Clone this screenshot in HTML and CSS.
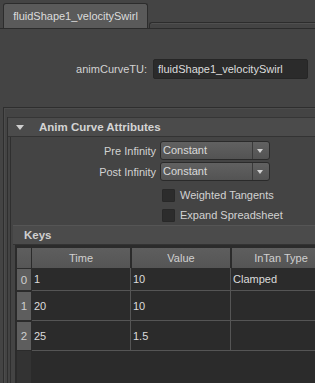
FILE: index.html
```html
<!DOCTYPE html>
<html lang="en">

<head>
    <meta charset="UTF-8">
    <title>Attribute Editor - animCurveTU</title>
    <link rel="stylesheet" href="styles.css">
</head>

<body>
    <div class="tabbar">
        <div class="tab">fluidShape1_velocitySwirl</div>
        <div class="tab-rest"></div>
    </div>

    <div class="node-row">
        <label class="node-label">animCurveTU:</label>
        <div class="node-field">fluidShape1_velocitySwirl</div>
    </div>

    <div class="scroll-frame">
        <div class="section">
            <div class="section-head"><span class="arrow"></span>Anim Curve Attributes</div>
            <div class="section-body">
                <div class="attr-row">
                    <span class="attr-label">Pre Infinity</span>
                    <div class="combo"><span class="combo-text">Constant</span><span class="combo-btn"></span></div>
                </div>
                <div class="attr-row">
                    <span class="attr-label">Post Infinity</span>
                    <div class="combo"><span class="combo-text">Constant</span><span class="combo-btn"></span></div>
                </div>
                <div class="check-row"><span class="box"></span>Weighted Tangents</div>
                <div class="check-row"><span class="box"></span>Expand Spreadsheet</div>

                <div class="sub-head">Keys</div>
                <div class="sheet">
                    <div class="sheet-row head">
                        <div class="rn"></div>
                        <div class="hc">Time</div>
                        <div class="hc">Value</div>
                        <div class="hc">InTan Type</div>
                    </div>
                    <div class="sheet-row first">
                        <div class="rn">0</div>
                        <div class="dc">1</div>
                        <div class="dc">10</div>
                        <div class="dc">Clamped</div>
                    </div>
                    <div class="sheet-row">
                        <div class="rn">1</div>
                        <div class="dc">20</div>
                        <div class="dc">10</div>
                        <div class="dc"></div>
                    </div>
                    <div class="sheet-row">
                        <div class="rn">2</div>
                        <div class="dc">25</div>
                        <div class="dc">1.5</div>
                        <div class="dc"></div>
                    </div>
                    <div class="sheet-rest"><div class="rn-rest"></div></div>
                </div>
            </div>
        </div>
    </div>
</body>

</html>
```

FILE: styles.css
```css
* {
    margin: 0;
    padding: 0;
    box-sizing: border-box;
}
html,
body {
    overflow: hidden;
}
body {
    width: 315px;
    height: 383px;
    background: #444;
    font: 11px "Liberation Sans", Arial, sans-serif;
    color: #d2d2d2;
}
/* tab strip */
.tabbar {
    display: flex;
    align-items: flex-end;
    height: 29px;
    padding: 3px 0 0 3px;
    border-bottom: 1px solid #2b2b2b;
}
.tab {
    width: 145px;
    height: 25px;
    line-height: 24px;
    text-align: center;
    background: #5a5a5a;
    border: 1px solid #2c2c2c;
    border-bottom: 0;
    border-radius: 3px 3px 0 0;
    color: #dcdcdc;
}
.tab-rest {
    flex: 1;
    height: 6px;
    margin-left: 1px;
    border-top: 1px solid #2c2c2c;
    border-left: 1px solid #2c2c2c;
    border-radius: 3px 0 0 0;
    box-shadow: inset 0 1px #505050;
}
/* node name */
.node-row {
    display: flex;
    align-items: center;
    height: 20px;
    margin-top: 30px;
}
.node-label {
    width: 147px;
    text-align: right;
}
.node-field {
    width: 155px;
    height: 20px;
    margin-left: 6px;
    padding-left: 4px;
    line-height: 19px;
    background: #2b2b2b;
    border: 1px solid #262626;
    border-radius: 2px;
    color: #dcdcdc;
}
/* attribute frame */
.scroll-frame {
    height: 300px;
    margin: 28px 0 0 3px;
    padding: 9px 0 0 3px;
    border-top: 1px solid #2e2e2e;
    border-left: 1px solid #2e2e2e;
    box-shadow: inset 1px 1px #4c4c4c;
}
.section {
    border-left: 1px solid #2f2f2f;
    height: 100%;
}
.section-head {
    display: flex;
    align-items: center;
    height: 20px;
    padding-left: 8px;
    background: #4b4b4b;
    border-top: 1px solid #363636;
    border-bottom: 1px solid #333;
    font-weight: bold;
    font-size: 11.5px;
    color: #d4d4d4;
}
.arrow {
    width: 0;
    height: 0;
    margin-right: 15px;
    border-left: 4.5px solid transparent;
    border-right: 4.5px solid transparent;
    border-top: 5px solid #cfcfcf;
}
.section-body {
    margin-left: 2px;
    padding: 4px 0 0 2px;
    border-left: 1px solid #2f2f2f;
    height: 100%;
}
.attr-row {
    display: flex;
    align-items: center;
    height: 19px;
    margin-bottom: 2px;
}
.attr-label {
    width: 143px;
    text-align: right;
}
.combo {
    display: flex;
    width: 110px;
    height: 19px;
    margin-left: 4px;
    background: linear-gradient(#616161, #535353);
    border: 1px solid #2a2a2a;
    border-radius: 3px;
}
.combo-text {
    flex: 1;
    padding-left: 2px;
    line-height: 17px;
    color: #dadada;
}
.combo-btn {
    width: 17px;
    border-left: 1px solid #3a3a3a;
    position: relative;
}
.combo-btn::after {
    content: "";
    position: absolute;
    left: 4px;
    top: 7px;
    border-left: 3.5px solid transparent;
    border-right: 3.5px solid transparent;
    border-top: 4px solid #d0d0d0;
}
.check-row {
    display: flex;
    align-items: center;
    height: 20px;
    padding-left: 149px;
}
.attr-row + .check-row {
    margin-top: 4px;
}
.box {
    width: 13px;
    height: 13px;
    margin-right: 5px;
    background: #2c2c2c;
    border: 1px solid #282828;
    border-radius: 1px;
}
/* keys spreadsheet */
.sub-head {
    height: 20px;
    padding-left: 11px;
    line-height: 19px;
    background: #4b4b4b;
    border-top: 1px solid #555;
    border-bottom: 1px solid #333;
    font-weight: bold;
    font-size: 11.5px;
    color: #d0d0d0;
}
.sheet {
    margin: 0 0 0 2px;
    padding: 3px 0 0 2px;
    background: #2b2b2b;
    height: 200px;
}
.sheet-row {
    display: flex;
    height: 30px;
}
.sheet-row.first {
    height: 23px;
}
.sheet-row.head {
    height: 20px;
}
.rn {
    flex: none;
    width: 14px;
    margin: 1px 1px 1px 0;
    background: #5e5e5e;
    text-align: center;
    line-height: 20px;
    color: #cfcfcf;
    font-size: 11.5px;
}
.sheet-row:not(.head) .rn {
    display: flex;
    align-items: center;
    justify-content: center;
}
.head .rn {
    margin: 0 1px 0 0;
    background: linear-gradient(#5e5e5e, #565656);
}
.hc {
    flex: none;
    width: 98px;
    margin-right: 2px;
    background: linear-gradient(#5e5e5e, #555);
    text-align: center;
    line-height: 20px;
    color: #d0d0d0;
}
.dc {
    flex: none;
    width: 100px;
    padding-left: 2px;
    border-right: 1px solid #555;
    border-bottom: 1px solid #555;
    display: flex;
    align-items: center;
    color: #dcdcdc;
}
.dc:nth-child(2) {
    width: 99px;
}
.dc:last-child {
    width: 110px;
}
.sheet-rest {
    height: 40px;
}
.rn-rest {
    width: 14px;
    height: 100%;
    background: #333;
}
```
